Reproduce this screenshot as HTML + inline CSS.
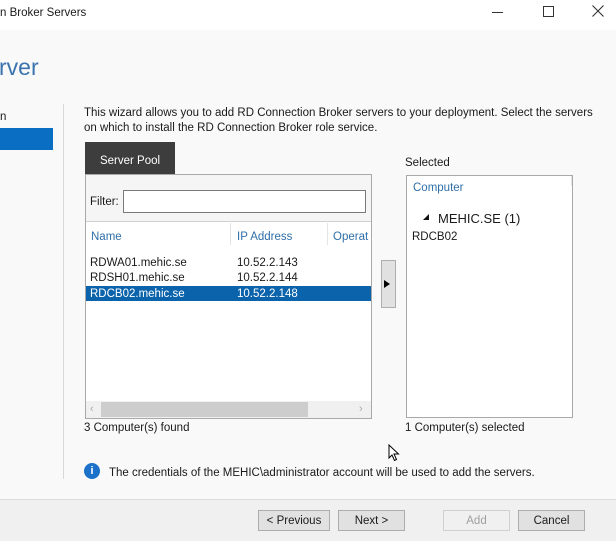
<!DOCTYPE html>
<html><head><style>
*{margin:0;padding:0;box-sizing:border-box}
body{width:616px;height:541px;overflow:hidden;background:#f9f9f9;font-family:"Liberation Sans",sans-serif;font-size:11.5px;color:#1a1a1a;position:relative}
.a{position:absolute;white-space:nowrap}
.t{margin-top:2px}
.btn{position:absolute;height:21px;border:1px solid #adadad;background:#e1e1e1;text-align:center;line-height:21px;font-size:11.5px}
</style></head><body>
<div class="a" style="left:0;top:0;width:616px;height:30px;background:#fff"></div>
<div class="a" style="left:0;top:7px;font-size:11.5px">n Broker Servers</div>
<div class="a" style="left:492px;top:12px;width:11px;height:1px;background:#333"></div>
<div class="a" style="left:543px;top:6px;width:11px;height:11px;border:1px solid #333"></div>
<svg class="a" style="left:592px;top:5px" width="12" height="12"><path d="M0.5 0.5L11.5 11.5M11.5 0.5L0.5 11.5" stroke="#333" stroke-width="1.1"/></svg>
<div class="a" style="left:-1px;top:54px;font-size:23px;color:#3a73ad">rver</div>
<div class="a" style="left:0;top:111px">n</div>
<div class="a" style="left:0;top:128px;width:53px;height:22px;background:#0a6fc2"></div>
<div class="a" style="left:63px;top:104px;width:1px;height:375px;background:#d8d8d8"></div>
<div class="a" style="left:84px;top:106px;line-height:15px">This wizard allows you to add RD Connection Broker servers to your deployment. Select the servers<br>on which to install the RD Connection Broker role service.</div>
<div class="a" style="left:85px;top:142px;width:90px;height:33px;background:#3d3d3d;color:#fff;text-align:center;line-height:38px">Server Pool</div>
<div class="a" style="left:85px;top:174px;width:287px;height:245px;border:1px solid #a9a9a9;background:#fff"></div>
<div class="a" style="left:86px;top:175px;width:285px;height:47px;background:#f5f5f5;border-bottom:1px solid #d0d0d0"></div>
<div class="a" style="left:90px;top:196px">Filter:</div>
<div class="a" style="left:123px;top:190px;width:243px;height:23px;border:1px solid #7a7a7a;background:#fff"></div>
<div class="a" style="left:91px;top:231px;color:#2f6fa8">Name</div>
<div class="a" style="left:237px;top:231px;color:#2f6fa8">IP Address</div>
<div class="a" style="left:333px;top:231px;color:#2f6fa8">Operat</div>
<div class="a" style="left:230px;top:223px;width:1px;height:22px;background:#e4e4e4"></div>
<div class="a" style="left:327px;top:223px;width:1px;height:22px;background:#e4e4e4"></div>
<div class="a" style="left:90px;top:257px">RDWA01.mehic.se</div><div class="a" style="left:237px;top:257px">10.52.2.143</div>
<div class="a" style="left:90px;top:272px">RDSH01.mehic.se</div><div class="a" style="left:237px;top:272px">10.52.2.144</div>
<div class="a" style="left:86px;top:286px;width:285px;height:15px;background:#0b63ab"></div>
<div class="a" style="left:90px;top:288px;color:#fff">RDCB02.mehic.se</div><div class="a" style="left:237px;top:288px;color:#fff">10.52.2.148</div>
<div class="a" style="left:86px;top:401px;width:285px;height:17px;background:#f0f0f0"></div>
<div class="a" style="left:101px;top:402px;width:207px;height:15px;background:#cdcdcd"></div>
<div class="a" style="left:90px;top:403px;color:#aaa;font-size:11px">‹</div>
<div class="a" style="left:359px;top:403px;color:#aaa;font-size:11px">›</div>
<div class="a" style="left:84px;top:422px">3 Computer(s) found</div>
<div class="a" style="left:381px;top:260px;width:15px;height:48px;border:1px solid #adadad;background:#e1e1e1"></div>
<div class="a" style="left:384px;top:280px;width:0;height:0;border-left:6px solid #000;border-top:4px solid transparent;border-bottom:4px solid transparent"></div>
<div class="a" style="left:405px;top:157px">Selected</div>
<div class="a" style="left:406px;top:175px;width:167px;height:243px;border:1px solid #a9a9a9;background:#fff"></div>
<div class="a" style="left:571px;top:176px;width:1px;height:10px;background:#e4e4e4"></div>
<div class="a" style="left:413px;top:182px;color:#2f6fa8">Computer</div>
<div class="a" style="left:423px;top:214px;width:0;height:0;border-right:6px solid #111;border-top:6px solid transparent"></div>
<div class="a" style="left:438px;top:211px;font-size:13px">MEHIC.SE (1)</div>
<div class="a" style="left:412px;top:231px">RDCB02</div>
<div class="a" style="left:405px;top:422px">1 Computer(s) selected</div>
<div class="a" style="left:84px;top:463px;width:16px;height:16px;border-radius:50%;background:#1b72c8;color:#fff;font-weight:bold;font-size:11px;text-align:center;line-height:16px">i</div>
<div class="a" style="left:109px;top:467px">The credentials of the MEHIC\administrator account will be used to add the servers.</div>
<svg class="a" style="left:388px;top:444px" width="12" height="18"><path d="M1 1L1 14L4 11L6.5 16.5L8.5 15.5L6 10L10.5 10Z" fill="#fff" stroke="#000" stroke-width="1"/></svg>
<div class="a" style="left:0;top:499px;width:616px;height:42px;background:#f0f0f0;border-top:1px solid #dcdcdc"></div>
<div class="btn" style="left:258px;top:510px;width:72px">&lt; Previous</div>
<div class="btn" style="left:338px;top:510px;width:67px">Next &gt;</div>
<div class="btn" style="left:443px;top:510px;width:67px;color:#a0a0a0;border-color:#d0d0d0;background:#f0f0f0">Add</div>
<div class="btn" style="left:518px;top:510px;width:67px">Cancel</div>
</body></html>
